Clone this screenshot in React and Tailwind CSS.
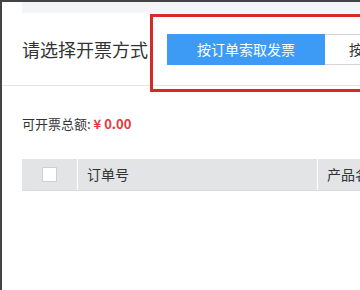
import React from "react";

const FONT = { fontFamily: '"Microsoft YaHei", "Noto Sans CJK SC", sans-serif' };

export default function App() {
  return (
    <div className="w-[360px] h-[290px] overflow-hidden bg-[#444] pt-[2px] pl-[2px]" style={FONT}>
      <div className="h-full bg-white">
        {/* top strip */}
        <div className="ml-[20px] h-[11px] bg-[#f4f5f7]" />

        {/* invoice mode row */}
        <div className="flex h-[73px] items-start border-b border-[#e6e6e6]">
          <div className="w-[148px] shrink-0 self-center pl-[20px] pt-[1px] text-[18px] text-[#333]">请选择开票方式</div>
          <div className="mt-[1px] flex h-[78px] flex-1 items-start border-[3px] border-r-0 border-[#d62b24] pl-[14px] pt-[17px]">
            <div className="flex h-[31px] w-[158px] shrink-0 items-center justify-center bg-[#3d9bf5] text-[14px] text-white">
              按订单索取发票
            </div>
            <div className="flex h-[31px] flex-1 items-center border border-l-0 border-[#d5d5d5] pl-[24px] text-[14px] text-[#333] whitespace-nowrap overflow-hidden">
              按发票索取
            </div>
          </div>
        </div>

        {/* total */}
        <div className="pl-[20px] pt-[28px] text-[13px] text-[#333]">
          可开票总额: <span className="font-bold text-[#e4393c]">¥ 0.00</span>
        </div>

        {/* table header */}
        <div className="ml-[20px] mt-[25px] flex h-[32px] bg-[#e2e4e5] border-b border-[#d5dedd] text-[14px] text-[#333]">
          <div className="flex w-[56px] shrink-0 items-center justify-center border-r border-white">
            <div className="h-[15px] w-[15px] bg-white border border-[#d0d0d0]" />
          </div>
          <div className="flex w-[240px] shrink-0 items-center border-r border-white pl-[9px]">订单号</div>
          <div className="flex flex-1 items-center pl-[9px] whitespace-nowrap overflow-hidden">产品名称</div>
        </div>
      </div>
    </div>
  );
}
